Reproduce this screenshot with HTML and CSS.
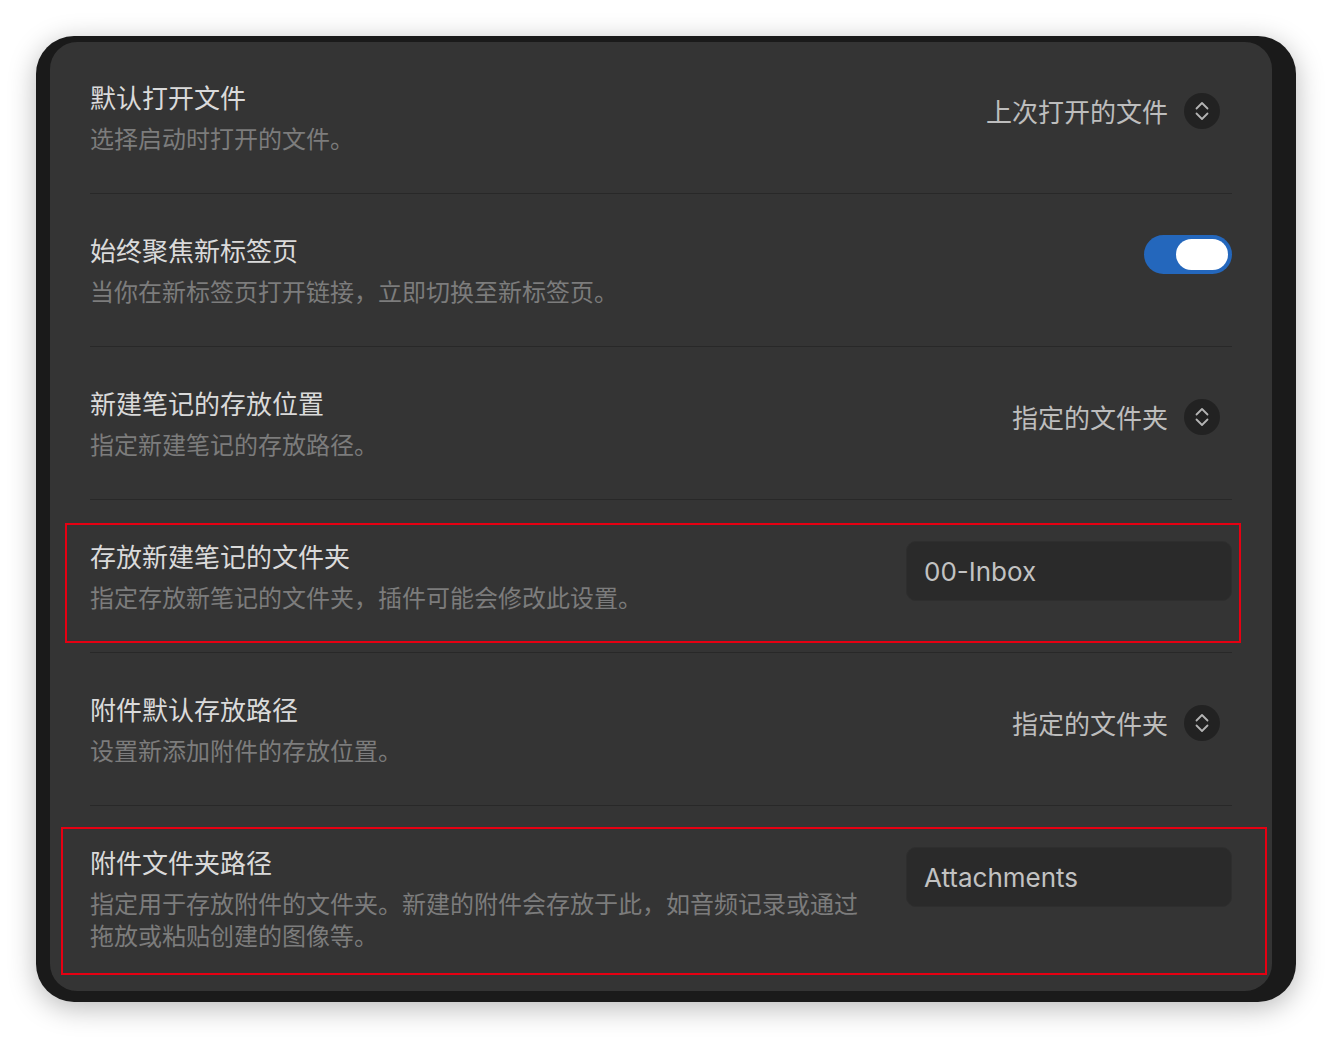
FILE: index.html
```html
<!DOCTYPE html>
<html lang="zh-CN">
<head>
<meta charset="utf-8">
<title>设置</title>
<link rel="stylesheet" href="styles.css">
</head>
<body>
<div class="window">
  <div class="panel">
    <div class="setting-item">
      <div class="info">
        <div class="name">默认打开文件</div>
        <div class="desc">选择启动时打开的文件。</div>
      </div>
      <div class="control dropdown">
        <span class="value">上次打开的文件</span>
        <span class="chevron">
          <svg width="14" height="20" viewBox="0 0 14 20" fill="none" stroke="currentColor" stroke-width="1.8" stroke-linecap="round" stroke-linejoin="round"><path d="M1.5 7.5 7 2l5.5 5.5"/><path d="M1.5 12.5 7 18l5.5-5.5"/></svg>
        </span>
      </div>
    </div>

    <div class="setting-item">
      <div class="info">
        <div class="name">始终聚焦新标签页</div>
        <div class="desc">当你在新标签页打开链接，立即切换至新标签页。</div>
      </div>
      <div class="control toggle is-enabled"><span class="knob"></span></div>
    </div>

    <div class="setting-item">
      <div class="info">
        <div class="name">新建笔记的存放位置</div>
        <div class="desc">指定新建笔记的存放路径。</div>
      </div>
      <div class="control dropdown">
        <span class="value">指定的文件夹</span>
        <span class="chevron">
          <svg width="14" height="20" viewBox="0 0 14 20" fill="none" stroke="currentColor" stroke-width="1.8" stroke-linecap="round" stroke-linejoin="round"><path d="M1.5 7.5 7 2l5.5 5.5"/><path d="M1.5 12.5 7 18l5.5-5.5"/></svg>
        </span>
      </div>
    </div>

    <div class="setting-item highlighted">
      <div class="info">
        <div class="name">存放新建笔记的文件夹</div>
        <div class="desc">指定存放新笔记的文件夹，插件可能会修改此设置。</div>
      </div>
      <div class="control text-input">00-Inbox</div>
      <span class="mark mark-inbox"></span>
    </div>

    <div class="setting-item">
      <div class="info">
        <div class="name">附件默认存放路径</div>
        <div class="desc">设置新添加附件的存放位置。</div>
      </div>
      <div class="control dropdown">
        <span class="value">指定的文件夹</span>
        <span class="chevron">
          <svg width="14" height="20" viewBox="0 0 14 20" fill="none" stroke="currentColor" stroke-width="1.8" stroke-linecap="round" stroke-linejoin="round"><path d="M1.5 7.5 7 2l5.5 5.5"/><path d="M1.5 12.5 7 18l5.5-5.5"/></svg>
        </span>
      </div>
    </div>

    <div class="setting-item highlighted">
      <div class="info">
        <div class="name">附件文件夹路径</div>
        <div class="desc">指定用于存放附件的文件夹。新建的附件会存放于此，如音频记录或通过拖放或粘贴创建的图像等。</div>
      </div>
      <div class="control text-input">Attachments</div>
      <span class="mark mark-attachments"></span>
    </div>
  </div>
</div>
</body>
</html>
```

FILE: styles.css
```css
html, body {
  margin: 0;
  padding: 0;
  background: #ffffff;
}

body {
  width: 1332px;
  height: 1038px;
  font-family: Inter, "Noto Sans CJK SC", sans-serif;
  overflow: hidden;
}

/* dark window frame with drop shadow */
.window {
  margin: 36px 0 0 36px;
  width: 1260px;
  height: 966px;
  box-sizing: border-box;
  padding: 6px 24px 11px 14px;
  background: #1a1a1a;
  border-radius: 38px;
  box-shadow: 0 6px 28px rgba(0, 0, 0, 0.28);
}

.panel {
  height: 100%;
  box-sizing: border-box;
  background: #343434;
  border-radius: 27px;
  padding: 0 40px;
  position: relative;
}

/* one setting row */
.setting-item {
  display: flex;
  align-items: flex-start;
  gap: 40px;
  padding: 41px 0 37px;
  border-top: 1px solid #282828;
  position: relative;
}

.setting-item:first-child {
  border-top: none;
  padding-top: 40px;
}

.info {
  flex: 1 1 auto;
  min-width: 0;
}

.name {
  font-size: 26px;
  line-height: 34px;
  color: #dadada;
}

.desc {
  margin-top: 8px;
  font-size: 24px;
  line-height: 32px;
  color: #7c7c7c;
}

.control {
  flex: 0 0 auto;
}

/* select with round chevron button */
.dropdown {
  display: flex;
  align-items: flex-start;
  gap: 16px;
  margin-top: 11px;
  padding-right: 12px;
}

.dropdown .value {
  font-size: 26px;
  line-height: 36px;
  padding-top: 2px;
  color: #bdbdbd;
}

.chevron {
  width: 36px;
  height: 36px;
  border-radius: 50%;
  background: #222222;
  color: #b4b4b4;
  display: flex;
  align-items: center;
  justify-content: center;
}

.chevron svg {
  display: block;
}

/* toggle switch */
.toggle {
  margin-top: 0;
  width: 88px;
  height: 39px;
  box-sizing: border-box;
  border-radius: 20px;
  background: #2467bc;
  padding: 4px 4px 4px 32px;
  display: flex;
}

.toggle .knob {
  flex: 1;
  border-radius: 16px;
  background: #ffffff;
}

/* text field */
.text-input {
  margin-top: 0;
  width: 326px;
  height: 60px;
  box-sizing: border-box;
  padding: 2px 16px 0 17px;
  border: 1px solid #2e2e2e;
  border-radius: 10px;
  background: #2a2a2a;
  font-size: 26px;
  line-height: 56px;
  color: #c2c2c2;
}

/* red annotation outlines drawn over rows */
.mark {
  position: absolute;
  border: 2px solid #e60012;
  pointer-events: none;
}

.mark-inbox {
  left: -25px;
  top: 23px;
  width: 1172px;
  height: 116px;
}

.mark-attachments {
  left: -29px;
  top: 21px;
  width: 1202px;
  height: 144px;
}
```
